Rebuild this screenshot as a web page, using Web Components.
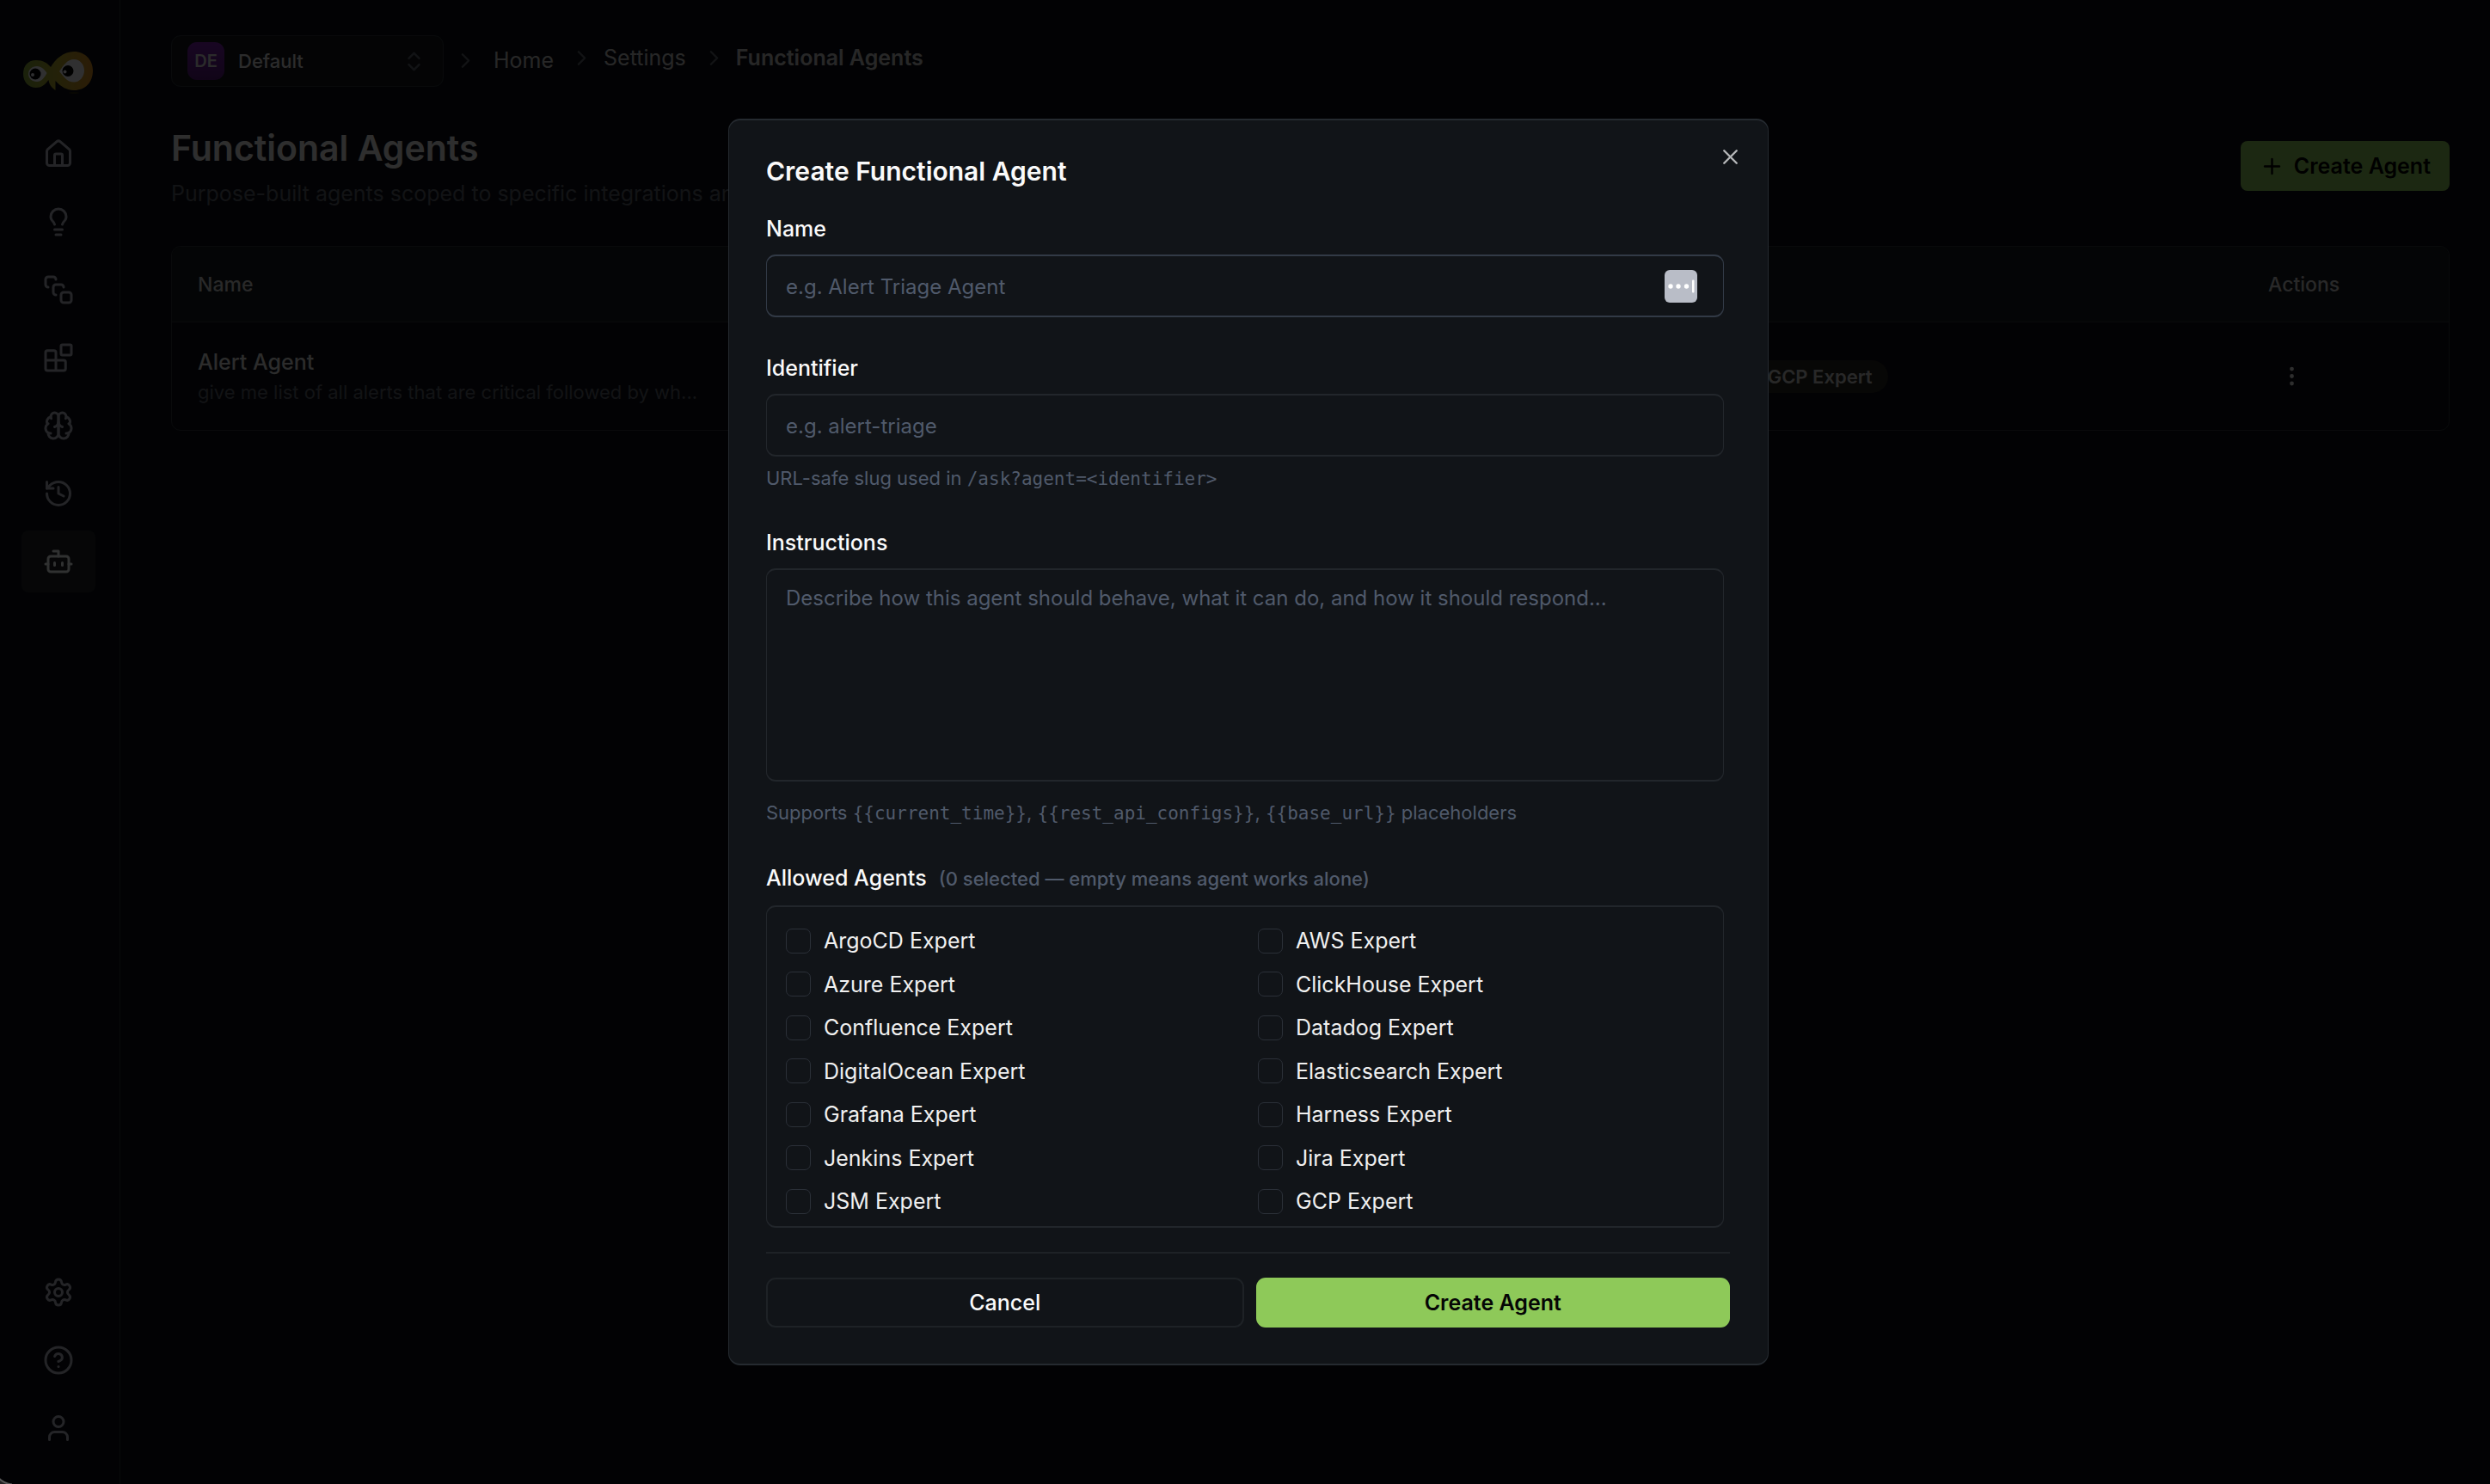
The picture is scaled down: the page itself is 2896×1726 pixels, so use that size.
<!DOCTYPE html>
<html lang="en">
<head>
<meta charset="utf-8">
<meta name="viewport" content="width=device-width, initial-scale=1">
<title>Functional Agents</title>
<style>
  :root {
    --bg: #0a0d14;
    --surface: #111418;
    --line: #22262b;
    --text: #fafafa;
    --muted: #505a6b;
    --green: #8ec959;
    --title: 41px;
    --lg: 30px;
    --md: 25px;
    --input: 24px;
    --sm: 22px;
    --code: 21px;
    --mono: "DejaVu Sans Mono", monospace;
  }

  body {
    margin: 0;
    min-height: 100vh;
    background: var(--bg);
    color: var(--text);
    font-family: Inter, "Noto Sans", sans-serif;
    font-size: var(--md);
  }
</style>
</head>
<body>
<app-shell>
  <app-sidebar slot="sidebar"></app-sidebar>
  <app-topbar></app-topbar>
  <page-heading>
    <span slot="title">Functional Agents</span>
    <span slot="subtitle">Purpose-built agents scoped to specific integrations and</span>
  </page-heading>
  <agents-table></agents-table>
</app-shell>
<agent-dialog></agent-dialog>

<script>
const icons = {
  home: '<path d="M15 21v-8a1 1 0 0 0-1-1h-4a1 1 0 0 0-1 1v8"/><path d="M3 10a2 2 0 0 1 .709-1.528l7-5.999a2 2 0 0 1 2.582 0l7 5.999A2 2 0 0 1 21 10v9a2 2 0 0 1-2 2H5a2 2 0 0 1-2-2z"/>',
  bulb: '<path d="M15 14c.2-1 .7-1.700 1.500-2.500 1-.9 1.500-2.200 1.500-3.500A6 6 0 0 0 6 8c0 1 .2 2.200 1.500 3.500.7.7 1.300 1.500 1.500 2.500"/><path d="M9 18h6"/><path d="M10 22h4"/>',
  flow: '<rect x="14" y="14" width="8" height="8" rx="2"/><path d="M10 16a2 2 0 0 1-2-2v-4a2 2 0 0 1 2-2h4a2 2 0 0 1 2 2"/><path d="M4 10a2 2 0 0 1-2-2V4a2 2 0 0 1 2-2h4a2 2 0 0 1 2 2"/>',
  blocks: '<rect width="8" height="8" x="14" y="2" rx="1"/><path d="M10 22V8c0-.8-.6-1.500-1.500-1.500h-5C2.600 6.500 2 7.200 2 8v12.500c0 .8.600 1.500 1.500 1.500H16c.8 0 1.500-.6 1.500-1.500V15.500c0-.8-.6-1.500-1.500-1.500H2"/>',
  brain: '<path d="M12 5a3 3 0 1 0-5.997.125 4 4 0 0 0-2.526 5.770 4 4 0 0 0 .556 6.588A4 4 0 1 0 12 18Z"/><path d="M12 5a3 3 0 1 1 5.997.125 4 4 0 0 1 2.526 5.770 4 4 0 0 1-.556 6.588A4 4 0 1 1 12 18Z"/><path d="M15 13a4.500 4.500 0 0 1-3-4 4.500 4.500 0 0 1-3 4"/><path d="M17.599 6.500a3 3 0 0 0 .399-1.375"/><path d="M6.003 5.125A3 3 0 0 0 6.401 6.500"/><path d="M3.477 10.896a4 4 0 0 1 .585-.396"/><path d="M19.938 10.500a4 4 0 0 1 .585.396"/><path d="M6 18a4 4 0 0 1-1.967-.516"/><path d="M19.967 17.484A4 4 0 0 1 18 18"/>',
  history: '<path d="M3 12a9 9 0 1 0 9-9 9.750 9.750 0 0 0-6.740 2.740L3 8"/><path d="M3 3v5h5"/><path d="M12 7v5l4 2"/>',
  bot: '<path d="M12 8V4H8"/><rect width="16" height="12" x="4" y="8" rx="2"/><path d="M2 14h2"/><path d="M20 14h2"/><path d="M15 13v2"/><path d="M9 13v2"/>',
  settings: '<path d="M9.671 4.136a2.340 2.340 0 0 1 4.659 0 2.340 2.340 0 0 0 3.319 1.915 2.340 2.340 0 0 1 2.330 4.033 2.340 2.340 0 0 0 0 3.831 2.340 2.340 0 0 1-2.330 4.033 2.340 2.340 0 0 0-3.319 1.915 2.340 2.340 0 0 1-4.659 0 2.340 2.340 0 0 0-3.320-1.915 2.340 2.340 0 0 1-2.330-4.033 2.340 2.340 0 0 0 0-3.831A2.340 2.340 0 0 1 6.350 6.051a2.340 2.340 0 0 0 3.319-1.915"/><circle cx="12" cy="12" r="3"/>',
  help: '<circle cx="12" cy="12" r="10"/><path d="M9.090 9a3 3 0 0 1 5.830 1c0 2-3 3-3 3"/><path d="M12 17h.01"/>',
  user: '<circle cx="12" cy="7" r="4"/><path d="M19 21v-2a4 4 0 0 0-4-4H9a4 4 0 0 0-4 4v2"/>',
  chevron: '<path d="m9 18 6-6-6-6"/>',
  updown: '<path d="m7 15 5 5 5-5"/><path d="m7 9 5-5 5 5"/>',
  plus: '<path d="M5 12h14"/><path d="M12 5v14"/>',
  close: '<path d="M18 6 6 18"/><path d="m6 6 12 12"/>',
  dots: '<circle cx="12" cy="12" r="1"/><circle cx="12" cy="5" r="1"/><circle cx="12" cy="19" r="1"/>',
};

const render = (element, html) => {
  const template = document.createElement('template');
  template.innerHTML = html;
  element.attachShadow({ mode: 'open' });
  element.shadowRoot.appendChild(template.content.cloneNode(true));
};

class AppIcon extends HTMLElement {
  constructor() {
    super();
    render(this, `<style>
      :host { display: block; flex: none; width: 29px; height: 29px; }
      :host([large]) { width: 36px; height: 36px; }
      svg { display: block; width: 100%; height: 100%; }
    </style>
    <svg viewBox="0 0 24 24" fill="none" stroke="currentColor" stroke-width="2"
      stroke-linecap="round" stroke-linejoin="round" aria-hidden="true">${icons[this.getAttribute('name')]}</svg>`);
  }
}

class BrandLogo extends HTMLElement {
  constructor() {
    super();
    render(this, `<style>
      :host { display: block; width: 81px; height: 49px; }
      svg { display: block; }
    </style>
    <svg width="81" height="49" viewBox="27 60 81 49" role="img" aria-label="Logo">
      <defs>
        <linearGradient id="body">
          <stop offset="0" stop-color="#83a33a"/>
          <stop offset=".5" stop-color="#b3a52c"/>
          <stop offset="1" stop-color="#d58a22"/>
        </linearGradient>
      </defs>
      <path fill="url(#body)" d="M42 70C50 70 55 73 59 78C64 69 74 60 86 60C99 60 108 70 108 82C108 96 99 105 86 105C78 105 71 101 64.500 94L64.500 105C60 102 57 98 56.500 93C52 99 48 102 42 102C33 102 27 95 27 86C27 76 33 70 42 70Z"/>
      <path fill="#f0f0f6" d="M43 77C48 77 52 81 54.500 85C52 90 48 95 43 95C37 95 33 91 33 86C33 81 37 77 43 77Z"/>
      <path fill="#f0f0f6" d="M86 69C93 69 98 75 98 82C98 89 93 95.500 86 95.500C78 95.500 74 89 69 83C74 76 78 69 86 69Z"/>
      <circle cx="41" cy="86" r="6.500" fill="#000"/>
      <circle cx="79" cy="82.500" r="6.500" fill="#000"/>
      <circle cx="38" cy="87" r="2" fill="#e8e8ee"/>
      <circle cx="75.500" cy="83.500" r="2" fill="#e8e8ee"/>
      <ellipse cx="86" cy="108" rx="6" ry="1" fill="#28240f"/>
    </svg>`);
  }
}

class SidebarLink extends HTMLElement {
  constructor() {
    super();
    render(this, `<style>
      :host { display: block; color: #b2b6c2; }
      a {
        display: flex;
        align-items: center;
        justify-content: center;
        width: 86px;
        height: 72px;
        border-radius: 8px;
        color: inherit;
      }
      :host([active]) { color: #f0f2f5; }
      :host([active]) a { background: #1e2226; }
    </style>
    <a href="#" aria-label="${this.getAttribute('label')}">
      <app-icon large name="${this.getAttribute('icon')}"></app-icon>
    </a>`);
  }
}

class AppSidebar extends HTMLElement {
  constructor() {
    super();
    render(this, `<style>
      :host {
        display: flex;
        flex-direction: column;
        align-items: center;
        box-sizing: border-box;
        width: 140px;
        height: 100%;
        padding: 60px 4px 29px 0;
        border-right: 1px solid #2e343b;
      }
      nav { display: flex; flex-direction: column; gap: 7px; }
      .top { margin-top: 34px; }
      .bottom { margin-top: auto; }
    </style>
    <brand-logo></brand-logo>
    <nav class="top" aria-label="Main">
      <sidebar-link icon="home" label="Home"></sidebar-link>
      <sidebar-link icon="bulb" label="Insights"></sidebar-link>
      <sidebar-link icon="flow" label="Workflows"></sidebar-link>
      <sidebar-link icon="blocks" label="Integrations"></sidebar-link>
      <sidebar-link icon="brain" label="Knowledge"></sidebar-link>
      <sidebar-link icon="history" label="History"></sidebar-link>
      <sidebar-link icon="bot" label="Agents" active></sidebar-link>
    </nav>
    <nav class="bottom" aria-label="Account">
      <sidebar-link icon="settings" label="Settings"></sidebar-link>
      <sidebar-link icon="help" label="Help"></sidebar-link>
      <sidebar-link icon="user" label="Profile"></sidebar-link>
    </nav>`);
  }
}

class AppShell extends HTMLElement {
  constructor() {
    super();
    render(this, `<style>
      :host { display: flex; height: 100vh; }
      main {
        flex: 1;
        min-width: 0;
        padding: 41px 47px 41px 59px;
      }
    </style>
    <slot name="sidebar"></slot>
    <main><slot></slot></main>`);
  }
}

class AppTopbar extends HTMLElement {
  constructor() {
    super();
    render(this, `<style>
      :host { display: flex; align-items: center; gap: 11px; color: #5c616a; }
      .workspace {
        display: flex;
        align-items: center;
        box-sizing: border-box;
        width: 317px;
        height: 60px;
        padding: 0 19px 0 18px;
        border: 1px solid #2e343b;
        border-radius: 11px;
        background: #14181c;
      }
      .badge {
        flex: none;
        width: 43px;
        margin-right: 16px;
        border-radius: 11px;
        background: linear-gradient(#7a22ac, #541878);
        color: #d4d4d4;
        font-size: 20px;
        font-weight: 600;
        line-height: 44px;
        text-align: center;
      }
      select {
        flex: 1;
        min-width: 0;
        padding: 0;
        border: 0;
        background: none;
        color: #dadada;
        font: 500 var(--sm) Inter, sans-serif;
        appearance: none;
      }
      nav, .trail { display: flex; align-items: center; gap: 11px; }
      nav { gap: 18px; padding-bottom: 2px; }
      .trail { padding-bottom: 6px; }
      a { color: #c4c4c4; text-decoration: none; }
      a + app-icon { margin-left: 7px; }
      [aria-current] { color: #c4c4c4; font-weight: 600; }
    </style>
    <div class="workspace">
      <span class="badge">DE</span>
      <select aria-label="Workspace"><option>Default</option></select>
      <app-icon name="updown"></app-icon>
    </div>
    <nav aria-label="Breadcrumb">
      <app-icon name="chevron"></app-icon>
      <a href="#">Home</a>
      <div class="trail">
        <app-icon name="chevron"></app-icon>
        <a href="#">Settings</a>
        <app-icon name="chevron"></app-icon>
        <span aria-current="page">Functional Agents</span>
      </div>
    </nav>`);
  }
}

class PageHeading extends HTMLElement {
  constructor() {
    super();
    render(this, `<style>
      :host {
        display: flex;
        align-items: flex-start;
        justify-content: space-between;
        margin: 44px 0 43px;
      }
      h1 { margin: 0; color: #e6e6e6; font-size: var(--title); font-weight: 600; line-height: 54px; }
      p { margin: 8px 0 0; color: #5c606a; line-height: 36px; }
      button {
        display: flex;
        align-items: center;
        gap: 11px;
        height: 58px;
        margin-top: 19px;
        padding: 0 22px;
        border: 0;
        border-radius: 8px;
        background: var(--green);
        color: #000;
        font: 600 var(--md) Inter, sans-serif;
      }
    </style>
    <div>
      <h1><slot name="title"></slot></h1>
      <p><slot name="subtitle"></slot></p>
    </div>
    <button type="button"><app-icon name="plus"></app-icon>Create Agent</button>`);
  }
}

class AgentsTable extends HTMLElement {
  constructor() {
    super();
    render(this, `<style>
      :host {
        display: block;
        overflow: hidden;
        border: 1px solid #2e343b;
        border-radius: 11px;
      }
      table { width: 100%; border-collapse: collapse; table-layout: fixed; }
      th, td { padding: 0 30px; text-align: left; }
      th {
        height: 87px;
        border-bottom: 1px solid #2e343b;
        background: #161a1e;
        color: #cacaca;
        font-size: 23px;
        font-weight: 500;
      }
      td { height: 125px; }
      .name { width: 66%; }
      .actions { width: 180px; }
      strong { display: block; color: #dadada; font-weight: 500; line-height: 36px; }
      small { display: block; color: #5c606a; font-size: var(--sm); line-height: 34px; }
      .tag {
        display: inline-block;
        padding: 0 18px;
        border-radius: 19px;
        background: #26231f;
        color: #c8c8c8;
        font-size: var(--sm);
        font-weight: 600;
        line-height: 38px;
      }
      button {
        display: flex;
        align-items: center;
        justify-content: center;
        width: 54px;
        height: 54px;
        padding: 0;
        border: 0;
        background: none;
        color: #e6e6e6;
      }
    </style>
    <table>
      <thead>
        <tr><th class="name">Name</th><th></th><th class="actions">Actions</th></tr>
      </thead>
      <tbody>
        <tr>
          <td><strong>Alert Agent</strong><small>give me list of all alerts that are critical followed by wh...</small></td>
          <td><span class="tag">GCP Expert</span></td>
          <td><button type="button" aria-label="Row actions"><app-icon name="dots"></app-icon></button></td>
        </tr>
      </tbody>
    </table>`);
  }
}

class AgentField extends HTMLElement {
  constructor() {
    super();
    const control = this.hasAttribute('multiline')
      ? '<textarea id="control"></textarea>'
      : '<input id="control" type="text">';
    render(this, `<style>
      :host { display: block; --border: var(--line); }
      :host([focused]) { --border: #323a46; }
      label { display: block; font-weight: 500; line-height: 24px; }
      .box { position: relative; margin-top: 18px; }
      input, textarea {
        display: block;
        box-sizing: border-box;
        width: 100%;
        height: 73px;
        padding: 2px 22px 0;
        border: solid var(--border);
        border-width: 2px 1px;
        border-radius: 11px;
        outline: 0;
        background: none;
        color: inherit;
        font: var(--input) Inter, sans-serif;
      }
      textarea { height: 248px; padding-top: 15px; line-height: 36px; resize: none; }
      ::placeholder { color: var(--muted); opacity: 1; }
      ::slotted(p) {
        margin: 10px 0 0;
        color: var(--muted);
        font-size: var(--sm);
        line-height: 30px;
      }
      :host([multiline]) ::slotted(p) { margin-top: 21px; }
      ::slotted(svg) { position: absolute; right: 31px; top: 18px; }
    </style>
    <label for="control"></label>
    <div class="box">${control}<slot name="adornment"></slot></div>
    <slot></slot>`);
    this.shadowRoot.querySelector('label').textContent = this.getAttribute('label');
    this.shadowRoot.querySelector('#control').placeholder = this.getAttribute('placeholder');
  }
}

class AgentOption extends HTMLElement {
  constructor() {
    super();
    render(this, `<style>
      :host { display: flex; align-items: center; gap: 15px; height: 36px; color: #f0f0f0; }
      input {
        flex: none;
        width: 29px;
        height: 29px;
        margin: 0;
        border: 1px solid #2b3038;
        border-radius: 7px;
        appearance: none;
      }
      input:checked { background: var(--green); }
      label { line-height: 36px; }
    </style>
    <input type="checkbox" id="tick">
    <label for="tick"><slot></slot></label>`);
  }
}

class AgentDialog extends HTMLElement {
  constructor() {
    super();
    render(this, `<style>
      :host {
        position: fixed;
        inset: 0;
        display: flex;
        align-items: center;
        justify-content: center;
        padding-left: 8px;
        background: rgba(0, 0, 0, .8);
      }
      section {
        position: relative;
        box-sizing: border-box;
        width: 100%;
        max-width: 1210px;
        padding: 43px 44px 42px 43px;
        border: solid #252a30;
        border-width: 2px 1px;
        border-radius: 14px;
        background: var(--surface);
      }
      h2 { margin: 0 0 39px; font-size: var(--lg); font-weight: 600; line-height: 32px; }
      .fields { display: flex; flex-direction: column; gap: 47px; padding-right: 7px; }
      .legend { display: flex; align-items: baseline; gap: 14px; font-weight: 500; line-height: 26px; }
      .legend small { color: var(--muted); font-size: var(--sm); }
      .options {
        display: grid;
        grid-template-columns: 1fr 1fr;
        column-gap: 30px;
        align-content: space-between;
        box-sizing: border-box;
        height: 375px;
        margin-top: 18px;
        padding: 21px 22px 11px;
        border: solid var(--line);
        border-width: 2px 1px;
        border-radius: 11px;
      }
      footer {
        display: flex;
        gap: 14px;
        margin-top: 28px;
        padding-top: 28px;
        border-top: 2px solid #1e2226;
      }
      footer button {
        flex: 1;
        height: 58px;
        padding: 0;
        border: 0;
        border-radius: 11px;
        background: var(--green);
        color: #050505;
        font: 600 var(--md) Inter, sans-serif;
      }
      footer .cancel {
        border: 2px solid #1e2226;
        background: none;
        color: var(--text);
        font-weight: 500;
      }
      .close {
        position: absolute;
        top: 28px;
        right: 29px;
        padding: 0;
        border: 0;
        background: none;
        color: #b4b6b8;
      }
      code { font-family: var(--mono); font-size: var(--code); }
    </style>
    <section role="dialog" aria-modal="true" aria-labelledby="heading">
      <h2 id="heading">Create Functional Agent</h2>
      <div class="fields">
        <agent-field label="Name" placeholder="e.g. Alert Triage Agent" focused>
          <svg slot="adornment" width="38" height="38" viewBox="0 0 38 38" aria-hidden="true">
            <rect width="38" height="38" rx="6" fill="#b9bdc7"/>
            <g fill="#fff">
              <circle cx="7" cy="19" r="2.700"/>
              <circle cx="16" cy="19" r="2.700"/>
              <circle cx="25.500" cy="19" r="2.700"/>
              <rect x="32" y="11.500" width="2.500" height="15" rx="1"/>
            </g>
          </svg>
        </agent-field>
        <agent-field label="Identifier" placeholder="e.g. alert-triage">
          <p>URL-safe slug used in <code>/ask?agent=&lt;identifier&gt;</code></p>
        </agent-field>
        <agent-field label="Instructions" multiline
          placeholder="Describe how this agent should behave, what it can do, and how it should respond...">
          <p>Supports <code>{{current_time}}</code>, <code>{{rest_api_configs}}</code>, <code>{{base_url}}</code> placeholders</p>
        </agent-field>
        <div role="group" aria-labelledby="allowed">
          <div class="legend">
            <span id="allowed">Allowed Agents</span>
            <small>(0 selected — empty means agent works alone)</small>
          </div>
          <div class="options">
            <agent-option>ArgoCD Expert</agent-option>
            <agent-option>AWS Expert</agent-option>
            <agent-option>Azure Expert</agent-option>
            <agent-option>ClickHouse Expert</agent-option>
            <agent-option>Confluence Expert</agent-option>
            <agent-option>Datadog Expert</agent-option>
            <agent-option>DigitalOcean Expert</agent-option>
            <agent-option>Elasticsearch Expert</agent-option>
            <agent-option>Grafana Expert</agent-option>
            <agent-option>Harness Expert</agent-option>
            <agent-option>Jenkins Expert</agent-option>
            <agent-option>Jira Expert</agent-option>
            <agent-option>JSM Expert</agent-option>
            <agent-option>GCP Expert</agent-option>
          </div>
        </div>
      </div>
      <footer>
        <button type="button" class="cancel">Cancel</button>
        <button type="button">Create Agent</button>
      </footer>
      <button type="button" class="close" aria-label="Close"><app-icon name="close"></app-icon></button>
    </section>
    <window-corner></window-corner>`);
  }
}

// rounded bottom left corner of the window frame
class WindowCorner extends HTMLElement {
  constructor() {
    super();
    render(this, `<style>
      :host {
        position: absolute;
        left: 0;
        bottom: 0;
        width: 14px;
        height: 7px;
        background: radial-gradient(circle at 16px -17px, transparent 23px, #5a5a5a 24px, #5a5a5a 25px, #222 26px);
      }
    </style>`);
  }
}

window.customElements.define('app-icon', AppIcon);
window.customElements.define('brand-logo', BrandLogo);
window.customElements.define('sidebar-link', SidebarLink);
window.customElements.define('app-sidebar', AppSidebar);
window.customElements.define('app-shell', AppShell);
window.customElements.define('app-topbar', AppTopbar);
window.customElements.define('page-heading', PageHeading);
window.customElements.define('agents-table', AgentsTable);
window.customElements.define('agent-field', AgentField);
window.customElements.define('agent-option', AgentOption);
window.customElements.define('window-corner', WindowCorner);
window.customElements.define('agent-dialog', AgentDialog);
</script>
</body>
</html>
